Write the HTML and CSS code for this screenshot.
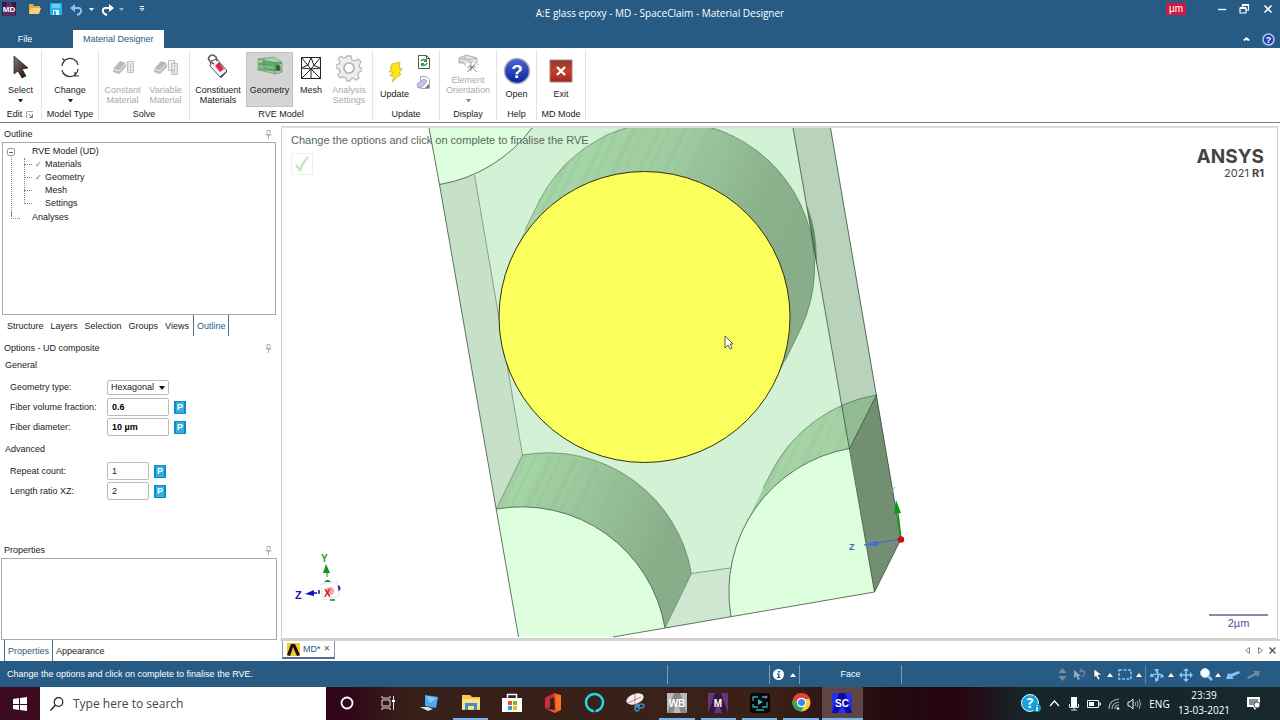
FILE: index.html
```html
<!DOCTYPE html>
<html lang="en">
<head>
<meta charset="utf-8">
<title>A:E glass epoxy - MD - SpaceClaim - Material Designer</title>
<link rel="stylesheet" href="styles.css">
</head>
<body>
<div class="app">
  <header class="titlebar">
    <div class="qat">
      <svg class="md-logo" width="14" height="14" viewBox="0 0 14 14"><rect width="14" height="14" fill="#3b1746"/><path d="M0 14 5 0h4l5 14z" fill="#5a2a66"/><text x="7" y="10" text-anchor="middle" font-size="8" font-weight="700" fill="#fff">MD</text></svg>
      <span class="qat-sep"></span>
      <button class="ib w21" aria-label="Open file"><svg width="14" height="12" viewBox="0 0 14 12"><path d="M1 11V1h4l1 2h6v2" fill="#e8a93c"/><path d="M1 11 3 5h10l-2 6z" fill="#ffd27a"/></svg></button>
      <button class="ib w21" aria-label="Save"><svg width="12" height="12" viewBox="0 0 12 12"><path d="M0 0h12v12H0z" fill="#1fb4ec"/><path d="M2 1h8v4H2z" fill="#67d0f5"/><path d="M3 7h6v5H3z" fill="#e8f7fd"/><path d="M4 8h2v4H4z" fill="#1fb4ec"/></svg></button>
      <button class="ib w21" aria-label="Undo"><svg width="14" height="13" viewBox="0 0 14 13"><path d="M2 5h6q4 0 3 4-1 2-4 3" fill="none" stroke="#84c4fa" stroke-width="2"/><path d="M0 5 5 1v8z" fill="#84c4fa"/></svg></button>
      <button class="ib w10" aria-label="Undo history"><svg width="5" height="3" viewBox="0 0 5 3"><path d="M0 0h5L2.500 3z" fill="#fff"/></svg></button>
      <button class="ib w21" aria-label="Redo"><svg width="14" height="13" viewBox="0 0 14 13"><path d="M12 5H6Q2 5 3 9q1 2 4 3" fill="none" stroke="#fff" stroke-width="2"/><path d="M14 5 9 1v8z" fill="#fff"/></svg></button>
      <button class="ib w10" aria-label="Redo history"><svg width="5" height="3" viewBox="0 0 5 3"><path d="M0 0h5L2.500 3z" fill="#8fb0cc"/></svg></button>
      <button class="ib w31" aria-label="Customize toolbar"><svg width="6" height="6" viewBox="0 0 6 6"><path d="M1 .5h4" stroke="#fff"/><path d="M1 2.500h4L3 5z" fill="none" stroke="#fff" stroke-width=".8"/></svg></button>
    </div>
    <h1 class="title">A:E glass epoxy - MD - SpaceClaim - Material Designer</h1>
    <div class="window-tools">
      <span class="unit">µm</span>
      <button class="ib w23" aria-label="Minimize"><svg width="10" height="10" viewBox="0 0 10 10"><path d="M1 5.500h8" stroke="#fff" stroke-width="1.400"/></svg></button>
      <button class="ib w23" aria-label="Restore"><svg width="11" height="10" viewBox="0 0 11 10"><path d="M3.500 3V1h6v5H7.500M1 4h6v5H1z" fill="none" stroke="#fff" stroke-width="1.200"/><path d="M3 1h7M1 4h6" stroke="#fff" stroke-width="2"/></svg></button>
      <button class="ib w23" aria-label="Close"><svg width="10" height="10" viewBox="0 0 10 10"><path d="m1.500 1.500 7 7m0-7-7 7" stroke="#fff" stroke-width="1.700"/></svg></button>
    </div>
  </header>
  <nav class="tabrow">
    <button class="file-tab">File</button>
    <button class="active-tab">Material Designer</button>
    <span class="spacer"></span>
    <button class="ib w21" aria-label="Collapse ribbon"><svg width="7" height="4" viewBox="0 0 7 4"><path d="M0 3 3.500 0 7 3 5 4 3.500 2.500 2 4z" fill="#fff"/></svg></button>
    <button class="ib w23" aria-label="Help"><svg width="13" height="13" viewBox="0 0 13 13"><circle cx="6.500" cy="6.500" r="5.500" fill="#2442b4" stroke="#b7c3df" stroke-width="1.500"/><text x="6.500" y="10" text-anchor="middle" font-size="9" font-weight="700" fill="#fff">?</text></svg></button>
  </nav>

  <section class="ribbon" aria-label="Ribbon">
    <div class="group g-edit">
      <div class="tools"><button class="tool">
        <svg width="24" height="30" viewBox="0 0 24 30"><defs><linearGradient id="cur" x2="1" y2="1"><stop stop-color="#8b7772"/><stop offset="1" stop-color="#120a08"/></linearGradient></defs><path d="M5 4v18l4-3 4 7 4-2-4-7 6-1z" fill="url(#cur)" stroke="#2b1511" stroke-width=".7"/></svg>
        <span>Select</span><i class="down"></i></button></div>
      <div class="caption">Edit <svg width="8" height="8" viewBox="0 0 8 8"><path d="M.5 7V.5H7" fill="none" stroke="#aaa"/><path d="M3 3l3 3M6.500 3v3.500H3" fill="none" stroke="#777"/></svg></div>
    </div>
    <div class="group g-type">
      <div class="tools"><button class="tool">
        <svg width="24" height="30" viewBox="0 0 24 30"><g fill="none" stroke="#333" stroke-width="1.200"><path d="M7 8q7-4 12 2l1 3M17 23q-7 4-12-2l-1-3M4 14q0-3 3-6M20 17q0 3-3 6M4.500 6.500 6.500 8.500 5 11M17 20v4h4"/></g></svg>
        <span>Change</span><i class="down"></i></button></div>
      <div class="caption">Model Type</div>
    </div>
    <div class="group g-solve">
      <div class="tools"><button class="tool" disabled>
        <svg class="faint" width="26" height="30" viewBox="0 0 26 30"><path d="m3 17 7-8 6 2v4l-7 7-6-2z" fill="#a4a4a4"/><path d="m3 17 6 2 7-8" fill="none" stroke="#eee"/><path d="M17.500 9.500h6v11h-6z" fill="#eee" stroke="#aaa"/><path d="M18 12h5M18 15h5M18 18h5M20.500 13v7" stroke="#bbb"/></svg>
        <span>Constant<br>Material</span></button>
        <button class="tool" disabled>
        <svg class="faint" width="28" height="30" viewBox="0 0 28 30"><path d="m2 17 7-8 6 2v4l-7 7-6-2z" fill="#a4a4a4"/><path d="m2 17 6 2 7-8" fill="none" stroke="#eee"/><path d="M16.500 8.500h6v10h-6zM19.500 11.500h6v11h-6z" fill="#eee" stroke="#aaa"/><path d="M20 14h5M20 17h5M20 20h5M22.500 15v7" stroke="#bbb"/></svg>
        <span>Variable<br>Material</span></button></div>
      <div class="caption">Solve</div>
    </div>
    <div class="group g-rve">
      <div class="tools"><button class="tool wide">
        <svg width="26" height="30" viewBox="0 0 26 30"><path d="m6 9 6-2 10 12-7 6L5 14z" fill="#f5f3fa" stroke="#46527a"/><path d="m10 14 4-4 5 7-4 3z" fill="#d92b45"/><path d="m15 25 7-6-1-2 1 3-6 6z" fill="#223368"/><path d="M9 12Q2 8 4 5q3-4 7 0l1 4" fill="none" stroke="#686064" stroke-width="1.700"/></svg>
        <span>Constituent<br>Materials</span></button>
        <button class="tool selected">
        <svg width="28" height="30" viewBox="0 0 28 30"><path d="m2 7 16-2 8 5v10l-6 2-18-4z" fill="#a8cda9" stroke="#6b9b70" stroke-width=".7"/><path d="m2 12 17 2 6-3-17-2z" fill="#62ae6b"/><path d="m2 12 17 2v5L2 17z" fill="#7cc284"/><path d="M2 7l17 4 7-1M19 11v11M8 6v10l18 3M2 12l17 2 7-3M2 17l17 2" fill="none" stroke="#4d8554" stroke-width=".7"/><ellipse cx="22" cy="16" rx="2.500" ry="3" fill="#276d35"/></svg>
        <span>Geometry</span></button>
        <button class="tool">
        <svg width="24" height="30" viewBox="0 0 24 30"><path d="M2.500 5.500h19v21h-19zM2.500 5.500 12 17l9.500-11.500M2.500 26.500 12 17l9.500 9.500M12 5.500 9 13M12 5.500l3 8M12 17v9.500M2.500 16 9 13M21.500 16 15 13.500M2.500 16 12 17M21.500 16 12 17" fill="none" stroke="#222"/></svg>
        <span>Mesh</span></button>
        <button class="tool last-tool" disabled>
        <svg width="26" height="30" viewBox="0 0 26 30"><path d="m11 4 4 0 1 4 3 1 3-2 3 3-2 4 1 2 2 0v3l-3 1-1 3 1 3-3 2-3-2-2 1-1 2h-3l-1-3-3-1-3 1-2-3 2-3-1-3-3-1v-3l3-1 1-2-2-3 3-3 3 2 2-1z" fill="#ededed" stroke="#b9b9b9" stroke-width="1.300"/><circle cx="13" cy="16" r="5" fill="#fff" stroke="#b2b2b2" stroke-width="1.700"/></svg>
        <span>Analysis<br>Settings</span></button></div>
      <div class="caption">RVE Model</div>
    </div>
    <div class="group g-update">
      <div class="tools"><button class="tool low">
        <svg width="22" height="30" viewBox="0 0 22 30"><path d="m8 8 8-2-1 7 3-1-3 6h2L8 26l2-6H6l3-4H5l3-4H6z" fill="#ffe619" stroke="#c7aa19" stroke-width=".7"/></svg>
        <span>Update</span></button>
        <div class="stack">
          <button class="ib" aria-label="Refresh"><svg width="14" height="16" viewBox="0 0 14 16"><path d="M1.500 1.500h8l3 3v10h-11z" fill="#fff" stroke="#555"/><path d="M9.500 1.500v3h3" fill="none" stroke="#555"/><path d="M4 7q2-3 5 0M10 9q-2 4-5 1" fill="none" stroke="#27943d" stroke-width="1.500"/><path d="M10 4v4H6.500zM4 13V9h3.500z" fill="#27943d"/></svg></button>
          <button class="ib" aria-label="Clear"><svg width="16" height="16" viewBox="0 0 16 16"><path d="M4.500 1.500h6l3 3v9h-9z" fill="#f7f7f7" stroke="#aaa"/><path d="m1 9 7-5 3 2-5 6-4 1z" fill="#c8c2ec" stroke="#8880b0" stroke-width=".6"/><path d="m9 13 4-4v4z" fill="#777"/></svg></button>
        </div></div>
      <div class="caption">Update</div>
    </div>
    <div class="group g-display">
      <div class="tools"><button class="tool high" disabled>
        <svg width="26" height="22" viewBox="0 0 26 22"><path d="m4 5 7-3 11 3v8H11l-2-3H4z" fill="#e2e2e2" stroke="#b0b0b0"/><path d="M4 5l10 2 8-2M14 7v6M4 8l5 2M10 3v4" fill="none" stroke="#b5b5b5"/><path d="M11 10h11v10H11z" fill="#fff"/><path d="m14 12 8 7M16 9v9M12 14h9M12 19l5-4 4-5" stroke="#888" stroke-width=".8"/></svg>
        <span>Element<br>Orientation</span><i class="down"></i></button></div>
      <div class="caption">Display</div>
    </div>
    <div class="group g-help">
      <div class="tools"><button class="tool low">
        <svg width="28" height="30" viewBox="0 0 28 30"><defs><linearGradient id="hb" x2="0" y2="1"><stop stop-color="#4a68cf"/><stop offset="1" stop-color="#0825a1"/></linearGradient></defs><circle cx="14" cy="15" r="12.500" fill="url(#hb)" stroke="#a9aebd" stroke-width="1.500"/><text x="14" y="22" text-anchor="middle" font-size="19" font-weight="700" fill="#fff">?</text></svg>
        <span>Open</span></button></div>
      <div class="caption">Help</div>
    </div>
    <div class="group g-exit">
      <div class="tools"><button class="tool low">
        <svg width="26" height="30" viewBox="0 0 26 30"><defs><linearGradient id="ex" x2="0" y2="1"><stop stop-color="#8e3734"/><stop offset=".5" stop-color="#c83d2c"/><stop offset="1" stop-color="#982b21"/></linearGradient></defs><path d="M2 4h22v22H2z" fill="url(#ex)" stroke="#a8807b"/><path d="m9 11 8 8m0-8-8 8" stroke="#fff" stroke-width="2.300"/></svg>
        <span>Exit</span></button></div>
      <div class="caption">MD Mode</div>
    </div>
  </section>

  <main class="workspace">
    <aside class="side">
      <div class="panel-head"><h2>Outline</h2><button class="ib" aria-label="Pin outline"><svg width="7" height="9" viewBox="0 0 7 9"><path d="M2 .5h3v4H2zM.5 5h6M3.500 5v4" fill="none" stroke="#777" stroke-width=".8"/></svg></button></div>
      <div class="tree">
        <ul>
          <li class="root"><button class="toggle" aria-label="Collapse"></button>RVE Model (UD)
            <ul class="children">
              <li><span class="tick">✓</span>Materials</li>
              <li><span class="tick">✓</span>Geometry</li>
              <li><span class="tick"></span>Mesh</li>
              <li><span class="tick"></span>Settings</li>
            </ul>
          </li>
          <li class="root last">Analyses</li>
        </ul>
      </div>
      <div class="tabs outline-tabs"><button>Structure</button><button>Layers</button><button>Selection</button><button>Groups</button><button>Views</button><button class="on">Outline</button></div>

      <div class="panel-head options-head"><h2>Options - UD composite</h2><button class="ib" aria-label="Pin options"><svg width="7" height="9" viewBox="0 0 7 9"><path d="M2 .5h3v4H2zM.5 5h6M3.500 5v4" fill="none" stroke="#777" stroke-width=".8"/></svg></button></div>
      <form class="options">
        <h3>General</h3>
        <div class="field first"><label for="geo">Geometry type:</label><span class="pick"><select id="geo"><option>Hexagonal</option></select><i class="drop"></i></span></div>
        <div class="field"><label for="fvf">Fiber volume fraction:</label><input id="fvf" class="strong" value="0.6"><button type="button" class="param"><b>P</b></button></div>
        <div class="field"><label for="fd">Fiber diameter:</label><input id="fd" class="strong" value="10 µm"><button type="button" class="param"><b>P</b></button></div>
        <h3 class="adv">Advanced</h3>
        <div class="field first"><label for="rc">Repeat count:</label><input id="rc" class="short" value="1"><button type="button" class="param"><b>P</b></button></div>
        <div class="field"><label for="lr">Length ratio XZ:</label><input id="lr" class="short" value="2"><button type="button" class="param"><b>P</b></button></div>
      </form>
      <div class="panel-head"><h2>Properties</h2><button class="ib" aria-label="Pin properties"><svg width="7" height="9" viewBox="0 0 7 9"><path d="M2 .5h3v4H2zM.5 5h6M3.500 5v4" fill="none" stroke="#777" stroke-width=".8"/></svg></button></div>
      <div class="props"></div>
      <div class="tabs prop-tabs"><button class="on">Properties</button><button>Appearance</button></div>
    </aside>

    <section class="document">
      <div class="viewport">
        <svg class="scene" viewBox="282 128 995 510" preserveAspectRatio="xMidYMid slice">
          <defs>
            <linearGradient id="cyl" gradientUnits="userSpaceOnUse" x1="540" y1="150" x2="790" y2="272"><stop stop-color="#a8d8a9"/><stop offset=".45" stop-color="#9ecb9f"/><stop offset=".8" stop-color="#8ab18b"/><stop offset="1" stop-color="#88ae89"/></linearGradient>
            <linearGradient id="cyl2" gradientUnits="userSpaceOnUse" x1="510" y1="470" x2="665" y2="545"><stop stop-color="#a7d7a8"/><stop offset=".5" stop-color="#98c499"/><stop offset="1" stop-color="#88ae89"/></linearGradient>
            <pattern id="streak" width="23" height="30" patternUnits="userSpaceOnUse" patternTransform="rotate(26)"><path d="M3 0h5v30H3z" fill="#84b78a" opacity=".18"/><path d="M13 0h3v30h-3z" fill="#84b78a" opacity=".14"/></pattern>
          </defs>
          <path d="M429 128H830.500L876.500 395 901 539 874.500 592 613 637H518.500L439.500 184.500z" fill="#d3f1d5"/>
          <path d="M439.500 184.500 474.500 175 522.500 455 496.500 509z" fill="#c6e1c7"/>
          <path d="M793 128H830.500L876.500 395 849.700 448.500z" fill="#b9d2bc"/>
          <path d="M429 128H532A145.500 145.500 0 0 1 439.500 184.500z" fill="#ddffdd"/>
          <path d="M513.900 253 540.400 199A145.500 145.500 0 0 1 801.600 327L775.100 381z" fill="url(#cyl)"/>
          <path d="M513.900 253 540.400 199A145.500 145.500 0 0 1 720 126L690 250z" fill="url(#streak)"/>
          <path d="M807 205A145.500 145.500 0 0 1 816.500 266z" fill="#648e68"/>
          <path d="M522.500 455A145.500 145.500 0 0 1 691.500 573.500L665 628A145.500 145.500 0 0 0 496.500 509z" fill="url(#cyl2)"/>
          <path d="M522.500 455Q580 448 620 480L585 535Q550 503 496.500 509z" fill="url(#streak)"/>
          <path d="M496.500 509A145.500 145.500 0 0 1 665 628L613 637H518.500z" fill="#ddffdd"/>
          <path d="M691.500 573.500 731 567.500V616.500L665 628z" fill="#cfe7d0"/>
          <path d="M743.700 528 770.400 474A145.500 145.500 0 0 1 876.500 395L849.700 448.500A145.500 145.500 0 0 0 743.700 528z" fill="#a5d3a6"/>
          <path d="M743.700 528 770.400 474A145.500 145.500 0 0 1 876.500 395L849.700 448.500A145.500 145.500 0 0 0 743.700 528z" fill="url(#streak)"/>
          <path d="M841.700 405Q860 397 876.500 395L849.700 448.500z" fill="#91bb92"/>
          <path d="M849.700 448.500A145.500 145.500 0 0 0 731 616.500L874.500 592z" fill="#ddffdd"/>
          <path d="M849.700 448.500 876.500 395 901 539 874.500 592z" fill="#728f72"/>
          <g fill="none" stroke="#263d29" stroke-width=".7">
            <path d="M429 128 439.500 184.500 518.500 637M532 128A145.500 145.500 0 0 1 439.500 184.500M793 128 874.500 592M830.500 128 901 539 874.500 592 613 637M849.700 448.500 876.500 395M496.500 509A145.500 145.500 0 0 1 665 628M849.700 448.500A145.500 145.500 0 0 0 731 616.500"/>
            <path opacity=".6" d="M474.500 175 522.500 455 496.500 509M525 230 540.400 199A145.500 145.500 0 0 1 801.600 327L785 361M522.500 455A145.500 145.500 0 0 1 691.500 573.500L665 628M691.500 573.500 730 568M763 488 770.400 474A145.500 145.500 0 0 1 876.500 395"/>
          </g>
          <circle cx="644.500" cy="317" r="145.500" fill="#fbff5c" stroke="#342e0e"/>
          <path d="M901 539 897 505" stroke="#079a10" stroke-width="1.500"/><path d="m896 500 5 13-7 1z" fill="#079a10"/><text x="890" y="492" font-size="8" fill="#65b96a">Y</text>
          <path d="M901 539 864 545" stroke="#3c63d9" stroke-width="1.200"/><path d="m863 545 14-4 1 5z" fill="#416be6"/><text x="849" y="550" font-size="9" font-weight="700" fill="#4263c9">Z</text>
          <circle cx="901" cy="539.500" r="3.200" fill="#c90c0c"/>
          <text x="321" y="562" font-size="10" font-weight="700" fill="#18992a">Y</text><path d="m326 564 4 9h-7z" fill="#0b9417"/><path d="M327 573v4" stroke="#0b9417"/><path d="M324 582q4-4 7 0z" fill="#0b8520"/>
          <text x="295" y="599" font-size="11" font-weight="700" fill="#1616ad">Z</text><path d="m305 594 9-4v6z" fill="#1111b8"/><path d="M313 593h4M319 590v4" stroke="#1111b8" stroke-width="1.500"/><path d="M338 585q5 3 0 7z" fill="#1111b8"/><path d="M330 600h5" stroke="#0b8520" stroke-width="1.500"/>
          <path d="m321 584 16-2 2 14-16 4z" fill="#fff" stroke="#ddd" stroke-width=".8"/><circle cx="330" cy="591" r="4" fill="#f6a4a4"/><text x="324" y="597" font-size="10" font-weight="700" fill="#cd1520">X</text>
          <path d="M725 336v12l3-3 2 4 2-1-2-4h3z" fill="#fff" stroke="#333" stroke-width=".8"/>
        </svg>
        <div class="hint"><p>Change the options and click on complete to finalise the RVE</p>
          <button class="complete" aria-label="Complete"><svg width="18" height="18" viewBox="0 0 18 18"><path d="m3 10 4 5Q10 7 15 2" fill="none" stroke="#bfe8c1" stroke-width="2.200"/></svg></button></div>
        <div class="brand"><strong>ANSYS</strong><span>2021 <b>R1</b></span></div>
        <div class="scale">2µm</div>
      </div>
      <div class="doc-tabs">
        <button class="doc-tab"><svg width="13" height="13" viewBox="0 0 13 13"><path d="M0 0h13v13H0z" fill="#f5c52c"/><path d="m0 12 4-11h4l5 11-3 1-4-9-3 9z" fill="#111"/></svg>MD*<span class="x">✕</span></button>
        <span class="spacer"></span>
        <button class="ib w12" aria-label="Previous"><svg width="6" height="7" viewBox="0 0 6 7"><path d="M4.500.5v6l-4-3z" fill="none" stroke="#666" stroke-width=".8"/></svg></button>
        <button class="ib w12" aria-label="Next"><svg width="6" height="7" viewBox="0 0 6 7"><path d="M1.500.5v6l4-3z" fill="none" stroke="#666" stroke-width=".8"/></svg></button>
        <button class="ib w12" aria-label="Close document"><svg width="7" height="7" viewBox="0 0 7 7"><path d="m.5.5 6 6m0-6-6 6" stroke="#555" stroke-width="1.300"/></svg></button>
      </div>
    </section>
  </main>

  <footer class="status">
    <span class="msg">Change the options and click on complete to finalise the RVE.</span>
    <span></span>
    <span class="info"><svg width="11" height="11" viewBox="0 0 11 11"><circle cx="5.500" cy="5.500" r="5.500" fill="#fff"/><path d="M5 2h2v1.500H5zM4 4.500h2.500V8h1v1H4V8h1V5.500H4z" fill="#275b84"/></svg><i class="up"></i></span>
    <span class="face">Face</span>
    <div class="view-tools">
      <button class="ib w16" aria-label="Step selection"><svg width="9" height="15" viewBox="0 0 9 15"><path d="M.5 6 4.500 1l4 5zM.5 9l4 5 4-5z" fill="#7f8b98"/></svg></button>
      <button class="ib w19" aria-label="Revert selection"><svg width="14" height="13" viewBox="0 0 14 13"><path d="M1 2v8l2-2 2 4 2-1-2-3h3z" fill="#9ba9b6"/><path d="M7 3h3q3 1 1 4l-2 2" fill="none" stroke="#6683a4" stroke-width="1.500"/><path d="M6 3l3-3v5z" fill="#6683a4"/></svg></button>
      <button class="ib w18" aria-label="Select"><svg width="10" height="13" viewBox="0 0 10 13"><path d="M1 1v9l2-2 2 4 2-1-2-4h4z" fill="#fff" stroke="#333" stroke-width=".6"/></svg></button>
      <i class="up"></i>
      <button class="ib w23" aria-label="Box select"><svg width="14" height="11" viewBox="0 0 14 11"><path d="M1 1h12v9H1z" fill="none" stroke="#87c7fb" stroke-width="1.600" stroke-dasharray="3 1.500"/></svg></button>
      <i class="up"></i>
      <button class="ib w23 lead" aria-label="Spin"><svg width="14" height="14" viewBox="0 0 14 14"><path d="M1 8q6-4 12 0M6 2q4 5 1 10" fill="none" stroke="#87c7fb" stroke-width="1.700"/><path d="m14 9-4 1 2-4zM0 9l1-4 3 4zM5 14V9l4 3zM4 1l5 0-2 4z" fill="#87c7fb"/></svg></button>
      <i class="up"></i>
      <button class="ib w23" aria-label="Pan"><svg width="14" height="14" viewBox="0 0 14 14"><path d="M7 1v12M1 7h12" stroke="#87c7fb" stroke-width="1.600"/><path d="m7 0 3 3H4zM7 14l3-3H4zM0 7l3-3v6zM14 7l-3-3v6z" fill="#87c7fb"/></svg></button>
      <button class="ib w18" aria-label="Zoom"><svg width="13" height="13" viewBox="0 0 13 13"><path d="m8 8 4 4" stroke="#87c7fb" stroke-width="2.500"/><circle cx="5" cy="5" r="4.500" fill="#fff" stroke="#a8d6fb"/></svg></button>
      <i class="up"></i>
      <button class="ib w23" aria-label="Previous view"><svg width="14" height="10" viewBox="0 0 14 10"><path d="M0 9 2 3l2 1 9-3 1 2-8 4 2 2z" fill="#82c2fa"/></svg></button>
      <button class="ib w18" aria-label="Next view"><svg width="14" height="10" viewBox="0 0 14 10"><path d="m14 1-7 0 2 2-8 4 1 2 8-4 2 2z" fill="#77889b"/></svg></button>
    </div>
  </footer>

  <footer class="taskbar">
    <button class="start" aria-label="Start"><svg width="14" height="14" viewBox="0 0 14 14"><path d="m0 2 6-1v6H0zM7 1l7-1v7H7zM0 8h6v5l-6-1zM7 8h7v6l-7-1z" fill="#fff"/></svg></button>
    <label class="search"><svg width="14" height="14" viewBox="0 0 14 14"><circle cx="8.500" cy="5" r="4.300" fill="none" stroke="#222" stroke-width="1.200"/><path d="M5.500 8 0.500 13.500" stroke="#222" stroke-width="1.300"/></svg><input aria-label="Search" placeholder="Type here to search"></label>
    <div class="pinned">
      <button aria-label="Cortana"><svg width="16" height="16" viewBox="0 0 16 16"><circle cx="8" cy="8" r="5.500" fill="none" stroke="#fff" stroke-width="1.800"/></svg></button>
      <button aria-label="Task view"><svg width="16" height="16" viewBox="0 0 16 16"><path d="M2 1v2h8V1M2 15v-2h8v2M2 5h8v6H2zM13.500 1v14" fill="none" stroke="#ddd"/><path d="M12 5h3v2h-3z" fill="#fff"/></svg></button>
      <button aria-label="Computer"><svg width="19" height="18" viewBox="0 0 19 18"><path d="m5 1 13 2-2 11-11-2z" fill="#48adf0"/><path d="m6 2 11 2-7 5z" fill="#80ccf7"/><path d="m0 13 8 0 5 2-5 2z" fill="#dce4e9"/></svg></button>
      <button class="open" aria-label="File Explorer"><svg width="20" height="17" viewBox="0 0 20 17"><path d="M1 1h8l2 2h8v13H1z" fill="#f4c84a"/><path d="M1 5h18v10H1z" fill="#ffe08a"/><path d="M4 9h12v7h-3v-4H7v4H4z" fill="#3991c9"/></svg></button>
      <button aria-label="Store"><svg width="20" height="20" viewBox="0 0 20 20"><path d="M5.500 6V1.500h9V6" fill="none" stroke="#fff" stroke-width="1.500"/><path d="M0 5h20v14H0z" fill="#fff"/><path d="M6 8h4v4H6z" fill="#ef4e26"/><path d="M11 8h4v4h-4z" fill="#7ab929"/><path d="M6 13h4v4H6z" fill="#26a4e4"/><path d="M11 13h4v4h-4z" fill="#f8b91b"/></svg></button>
      <button aria-label="Office"><svg width="16" height="20" viewBox="0 0 16 20"><path d="m0 5 9-5v4L5 6v8l-3 2-2-1z" fill="#d2293b"/><path d="m9 0 7 2v15l-6 3-9-4 9 1z" fill="#ed5822"/><path d="M11 2v15h5V2z" fill="#f47624"/></svg></button>
      <button aria-label="Alexa"><svg width="21" height="21" viewBox="0 0 21 21"><circle cx="10.500" cy="10.500" r="8.500" fill="none" stroke="#1ddce8" stroke-width="2.500"/><path d="M9 17h3l-1 4z" fill="#35201b"/></svg></button>
      <button aria-label="Snipping tool"><svg width="19" height="19" viewBox="0 0 19 19"><ellipse cx="9" cy="6" rx="9" ry="5" transform="rotate(-20 9 6)" fill="#f2eeee"/><path d="M2 10 15 4M9 1v12" stroke="#bf4a4a" stroke-width=".7"/><path d="m9 8 3 6M9 15l5-3" stroke="#ddd"/><ellipse cx="11" cy="15" rx="2" ry="3" fill="none" stroke="#338bc8" stroke-width="1.500"/><ellipse cx="15" cy="13" rx="3" ry="2" fill="none" stroke="#338bc8" stroke-width="1.500"/></svg></button>
      <button class="open" aria-label="Workbench"><svg width="20" height="20" viewBox="0 0 20 20"><path d="M0 0h20v20H0z" fill="#bbb"/><path d="m0 20 7-20h6l7 20h-6L10 9 6 20z" fill="#888"/><text x="10" y="14" text-anchor="middle" font-size="10" font-weight="700" fill="#fff">WB</text></svg></button>
      <button class="open" aria-label="Mechanical"><svg width="20" height="20" viewBox="0 0 20 20"><path d="M0 0h20v20H0z" fill="#67357a"/><path d="m0 20 7-20h6l7 20h-6L10 9 6 20z" fill="#371540"/><text x="10" y="14" text-anchor="middle" font-size="10" font-weight="700" fill="#fff">M</text></svg></button>
      <button class="open" aria-label="Recorder"><svg width="20" height="20" viewBox="0 0 20 20"><rect width="20" height="20" rx="3" fill="#050709"/><path d="M3 8V4h5M12 4h5M17 9v5h-5M8 14H3v-3M6 17h8" fill="none" stroke="#28aebe" stroke-width="1.300"/><path d="m8 6 5 3-5 3z" fill="#32b9c9"/><circle cx="16" cy="4" r="1.500" fill="#bd667b"/></svg></button>
      <button class="open" aria-label="Chrome"><svg width="19" height="19" viewBox="0 0 19 19"><circle cx="9.500" cy="9.500" r="9" fill="#f8cc3d"/><path d="M1 6A9 9 0 0 1 18 6H9L6 11z" fill="#e34234"/><path d="M1 6A9 9 0 0 0 9 18.500l4-7-6 1z" fill="#2fa652"/><circle cx="9.500" cy="9.500" r="4.200" fill="#4286ef" stroke="#fff" stroke-width="1.200"/></svg></button>
      <button class="open current" aria-label="SpaceClaim"><svg width="20" height="20" viewBox="0 0 20 20"><path d="M0 0h20v20H0z" fill="#2430e8"/><path d="m0 20 7-20h6l7 20h-6L10 9 6 20z" fill="#0a0aa5"/><text x="10" y="14" text-anchor="middle" font-size="10" font-weight="700" fill="#fff">SC</text></svg></button>
    </div>
    <span class="spacer"></span>
    <div class="tray">
      <button class="ib w26" aria-label="Support"><svg width="20" height="19" viewBox="0 0 20 19"><circle cx="9" cy="9" r="8.500" fill="#16a4da" stroke="#e9f7fc"/><text x="9" y="14" text-anchor="middle" font-size="14" font-weight="700" fill="#fff">?</text><circle cx="16" cy="14" r="4" fill="#1495cc"/><path d="M16 11v1M16 13v4" stroke="#fff" stroke-width="1.500"/></svg></button>
      <button class="ib w20" aria-label="Hidden icons"><svg width="11" height="7" viewBox="0 0 11 7"><path d="m1 6 4.500-5L10 6" fill="none" stroke="#fff" stroke-width="1.200"/></svg></button>
      <button class="ib w20" aria-label="Microphone"><svg width="10" height="14" viewBox="0 0 10 14"><path d="M2 0h6v10H2z" fill="#fff"/><path d="M.5 7v3.500h9V7M5 10v3M2 13h6" fill="none" stroke="#ddd"/></svg></button>
      <button class="ib w20" aria-label="Battery"><svg width="14" height="8" viewBox="0 0 14 8"><path d="M.5.5h11v7H.5zM12 3h1.500v2H12" fill="none" stroke="#eee"/><path d="M2 2h5v4H2z" fill="#fff"/></svg></button>
      <button class="ib w20" aria-label="Network"><svg width="12" height="12" viewBox="0 0 12 12"><path d="M1 11Q1 2 11 1M4 11q0-6 7-7M7 11q0-4 4-4" fill="none" stroke="#aaa" stroke-width="1.200"/><circle cx="10" cy="10.500" r="1.300" fill="#fff"/></svg></button>
      <button class="ib w20" aria-label="Volume"><svg width="14" height="12" viewBox="0 0 14 12"><path d="M1 4h2l3-3v10L3 8H1z" fill="none" stroke="#eee"/><path d="M8 4q1 2 0 4M10 3q2 3 0 6M12 1q3 5 0 10" fill="none" stroke="#aaa"/></svg></button>
      <span class="lang">ENG</span>
      <time class="clock">23:39<br>13-03-2021</time>
      <button class="ib w40" aria-label="Notifications"><svg width="15" height="15" viewBox="0 0 15 15"><path d="M1 1h13v10h-3l-2 3-2-3H1z" fill="#fff"/><path d="M3 4h9M3 6h9M3 8h5" stroke="#17262b"/><circle cx="11" cy="9" r="3" fill="#fff" stroke="#17262b" stroke-width=".8"/></svg></button>
    </div>
  </footer>
</div>
</body>
</html>
```

FILE: styles.css
```css
* { box-sizing: border-box; }
body { margin: 0; font-family: "Liberation Sans", Arial, sans-serif; font-size: 9px; line-height: 12px; color: #222; background: #fff; }
button { font: inherit; color: inherit; border: 0; background: none; padding: 0; margin: 0; white-space: nowrap; }
h1, h2, h3, p, ul { margin: 0; padding: 0; font-weight: 400; font-size: inherit; }
ul { list-style: none; }
svg { display: block; flex: none; }
.app { min-height: 100vh; display: flex; flex-direction: column; }
.spacer { flex: 1; }
.ib { display: flex; align-items: center; justify-content: center; flex: none; }
.w10 { width: 9px; }
.w12 { width: 12px; }
.w16 { width: 16px; }
.w18 { width: 18px; }
.w19 { width: 19px; }
.w20 { width: 20px; }
.w21 { width: 21px; }
.w23 { width: 23px; }
.w26 { width: 26px; }
.w31 { width: 31px; }
.w40 { width: 40px; }

/* title bar */
.titlebar { display: flex; height: 30px; background: #275b84; color: #fff; }
.qat { display: flex; align-items: center; width: 154px; height: 18px; padding-left: 2px; }
.qat-sep { width: 1px; height: 14px; margin: 0 3px 0 5px; background: #bccddb; }
.title { flex: 1; text-align: center; font-family: "Open Sans", "Noto Sans", sans-serif; font-size: 10px; line-height: 26px; white-space: nowrap; }
.window-tools { display: flex; height: 18px; width: 114px; }
.unit { width: 20px; height: 12px; margin: 3px 24px 0 0; background: #d5183f; font-size: 10px; line-height: 11px; text-align: center; }
.tabrow { display: flex; height: 18px; background: #275b84; color: #fff; }
.file-tab { width: 50px; margin-right: 23px; }
.active-tab { padding: 0 10px; background: #fff; color: #275b84; }

/* ribbon */
.ribbon { display: flex; height: 75px; padding-top: 2px; border-bottom: 1px solid #77808f; }
.group { display: flex; flex-direction: column; border-right: 1px solid #e4e4e4; margin-bottom: 2px; }
.tools { flex: 1; display: flex; justify-content: center; padding-top: 2px; }
.caption { display: flex; justify-content: center; gap: 4px; align-items: center; line-height: 11px; white-space: nowrap; }
.tool { display: flex; flex-direction: column; align-items: center; line-height: 10px; min-width: 43px; padding: 0 2px; height: 55px; }
.tool svg { margin-bottom: 3px; }
.tool.low { padding-top: 4px; }
.tool.high { padding-top: 1px; }
.tool.high svg { margin-bottom: 0; }
.tool .faint { opacity: .75; }
.tool:disabled { color: #aaa; }
.down { width: 5px; border: 2px solid transparent; border-top: 3px solid #222; border-bottom: 0; margin-top: 4px; }
.tool:disabled .down { border-top-color: #888; }
.stack { display: flex; flex-direction: column; gap: 5px; padding-top: 2px; }
.g-edit { width: 42px; }
.g-type { width: 57px; }
.g-solve { width: 91px; }
.g-rve { width: 183px; }
.g-rve .tools, .g-update .tools { justify-content: flex-start; }
.g-rve .tool { min-width: 36px; }
.g-rve .wide { min-width: 56px; }
.g-rve .selected { min-width: 47px; background: #d5d5d5; outline: 1px solid #c2c2c2; outline-offset: -1px; }
.g-rve .last-tool { min-width: 40px; }
.g-update { width: 67px; }
.g-display { width: 57px; }
.g-help { width: 40px; }
.g-exit { width: 49px; }

/* side panels */
.workspace { flex: 1; display: flex; padding-top: 3px; }
.side { display: flex; flex-direction: column; width: 278px; flex: none; }
.panel-head { display: flex; justify-content: space-between; align-items: center; padding: 0 6px 0 4px; height: 16px; }
.panel-head .ib { opacity: .7; }
.tree { flex: 1 0 171px; border: 1px solid #aaa; margin: 0 2px; padding: 2px 8px; }
.tree li { line-height: 13px; }
.root { position: relative; padding-left: 21px; }
.root::before { content: ""; position: absolute; left: 0; top: 6px; width: 8px; height: 100%; border-left: 1px dotted #888; }
.root.last::before { top: 0; height: 7px; border-bottom: 1px dotted #888; }
.toggle { position: absolute; left: -4px; top: 3px; width: 8px; height: 8px; border: 1px solid #999; border-radius: 2px; background: linear-gradient(#666, #666) center / 4px 1px no-repeat #fff; }
.children { position: relative; margin: 0 0 1px -8px; }
.children::before { content: ""; position: absolute; left: 0; top: 0; bottom: 6px; border-left: 1px dotted #888; }
.children li { display: flex; align-items: center; }
.children li::before { content: ""; width: 8px; border-top: 1px dotted #888; }
.tick { width: 13px; padding-left: 3px; font-family: "DejaVu Sans", sans-serif; font-size: 8px; color: #55753f; }
.tabs { display: flex; height: 21px; white-space: nowrap; }
.outline-tabs { padding-left: 4px; }
.tabs button { padding: 0 3px; }
.outline-tabs button { margin-right: 1px; }
.tabs .on { color: #275b84; border: 1px solid #526d87; border-width: 0 1px; }
.options-head { margin-top: 4px; }
.options { flex: none; padding: 0 5px 41px; }
.options h3 { line-height: 18px; }
.options .adv { margin-top: 3px; }
.field { display: flex; align-items: center; height: 20px; padding-left: 5px; }
.first { margin-top: 3px; }
.field label { width: 97px; }
.field input, .field select { width: 62px; height: 18px; border: 1px solid #bbb; border-radius: 2px; padding: 0 4px; font: inherit; background: #fff; color: #222; }
.field .short { width: 42px; }
.field .strong { font-weight: 700; color: #000; }
.pick { position: relative; }
.field select { appearance: none; height: 15px; padding: 0 3px; display: block; }
.drop { position: absolute; right: 4px; top: 6px; border: 3px solid transparent; border-top: 4px solid #111; border-bottom: 0; pointer-events: none; }
.param { width: 12px; height: 13px; margin-left: 5px; border: solid #0d8ecb; border-width: 1px 2px; background: #35aee0; color: #fff; line-height: 10px; }
.props { flex: none; min-height: 82px; border: 1px solid #aaa; margin: 0 1px; }
.prop-tabs { padding-left: 4px; }

/* document */
.document { flex: 1; display: flex; flex-direction: column; padding-left: 3px; min-width: 0; }
.viewport { flex: 1; position: relative; border: 1px solid #cfcfc5; border-top: 2px solid #dfdfd5; margin-right: 2px; overflow: hidden; }
.scene { position: absolute; inset: 0; width: 100%; height: 100%; }
.hint { position: absolute; left: 9px; top: 6px; font-size: 11px; color: #59675b; }
.complete { display: block; margin-top: 7px; padding: 1px; border: 1px solid #eee; }
.brand { position: absolute; right: 13px; top: 20px; display: flex; flex-direction: column; align-items: flex-end; color: #444; font-family: Inter, sans-serif; }
.brand strong { font-size: 19px; line-height: 18px; }
.brand span { font-size: 11px; line-height: 14px; }
.scale { position: absolute; right: 9px; bottom: 8px; width: 59px; border-top: 2px solid #8987b3; text-align: center; font-size: 11px; line-height: 14px; color: #5a46ac; }
.doc-tabs { display: flex; height: 22px; border-top: 2px solid #d4d4d4; margin-left: -1px; padding: 0 2px 2px; }
.doc-tab { display: flex; align-items: center; gap: 3px; padding: 0 4px; border: 1px solid #8497b0; border-bottom: 2px solid #526f93; border-top: 0; color: #275b84; }
.x { color: #555; font-family: "DejaVu Sans", sans-serif; font-size: 8px; }

/* status bar */
.status { display: grid; grid-template-columns: minmax(0, 1fr) 102px 30px 102px 378px; height: 26px; padding: 4px 0 3px; background: #275b84; color: #fff; }
.status > span { border-right: 1px solid #7d9cb5; line-height: 19px; }
.msg { padding-left: 7px; }
.status > .info { display: flex; align-items: center; justify-content: center; gap: 6px; }
.face { text-align: center; }
.up { flex: none; width: 6px; border: 3px solid transparent; border-bottom: 4px solid #fff; border-top: 0; align-self: center; }
.view-tools { display: flex; padding-left: 152px; }
.lead { border-left: 1px solid #5f86a6; margin-left: 3px; }

/* taskbar */
.taskbar { display: flex; height: 33px; color: #fff; background: linear-gradient(90deg, #3d0b20 0, #30061a 27%, #38201a 32%, #3a2118 60%, #22090f 70%, #27050f 75%, #16252a 80%, #16282b 100%); }
.start { display: grid; place-items: center; width: 40px; }
.search { display: flex; align-items: center; gap: 9px; width: 286px; padding-left: 10px; background: #fff; }
.search input { flex: 1; min-width: 0; border: 0; padding: 0; font: 12px/20px "Open Sans", "Noto Sans", sans-serif; background: none; }
.search input::placeholder { color: #444; opacity: 1; }
.pinned { display: grid; grid-template-columns: repeat(13, 1fr); width: 537px; }
.pinned button { display: grid; place-items: center; border-bottom: 2px solid transparent; margin: 0 3px; }
.pinned .open { border-bottom-color: #76b5e8; }
.pinned .current { margin: 0; background: #5d4643; }
.tray { display: flex; font-family: "Open Sans", "Noto Sans", sans-serif; font-size: 10px; padding-right: 7px; }
.lang { width: 31px; text-align: center; line-height: 34px; }
.clock { width: 58px; text-align: center; line-height: 15px; padding-top: 1px; }
```
